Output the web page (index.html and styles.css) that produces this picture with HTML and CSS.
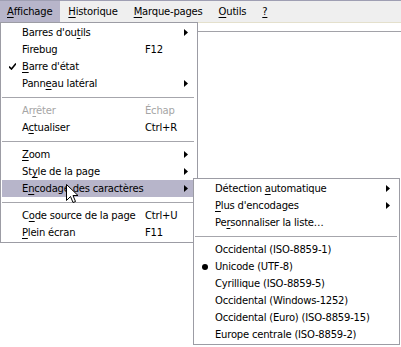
FILE: index.html
```html
<!DOCTYPE html>
<html lang="fr">
<head>
<meta charset="utf-8">
<title>Affichage</title>
<link rel="stylesheet" href="styles.css">
</head>
<body>
<div class="window">
  <div class="menubar">
    <span class="mb-item mb-open"><u>A</u>ffichage</span>
    <span class="mb-item"><u>H</u>istorique</span>
    <span class="mb-item"><u>M</u>arque-pages</span>
    <span class="mb-item"><u>O</u>utils</span>
    <span class="mb-item"><u>?</u></span>
  </div>
  <div class="content"></div>

  <div class="menu menu-main">
    <div class="mi"><span class="ic"></span><span class="lb">Barres d'ou<u>t</u>ils</span><span class="sc"></span><span class="ar"><svg width="4" height="7" viewBox="0 0 4 7"><path d="M0 0L4 3.5L0 7Z"/></svg></span></div>
    <div class="mi"><span class="ic"></span><span class="lb">Firebug</span><span class="sc">F12</span><span class="ar"></span></div>
    <div class="mi"><span class="ic"><svg width="7" height="7" viewBox="0 0 7 7"><path d="M0 3.5L2.5 6L7 0.5" fill="none" stroke="#000" stroke-width="1.6"/></svg></span><span class="lb"><u>B</u>arre d'état</span><span class="sc"></span><span class="ar"></span></div>
    <div class="mi"><span class="ic"></span><span class="lb">Pann<u>e</u>au latéral</span><span class="sc"></span><span class="ar"><svg width="4" height="7" viewBox="0 0 4 7"><path d="M0 0L4 3.5L0 7Z"/></svg></span></div>
    <div class="sep"></div>
    <div class="mi disabled"><span class="ic"></span><span class="lb">Ar<u>r</u>êter</span><span class="sc">Échap</span><span class="ar"></span></div>
    <div class="mi"><span class="ic"></span><span class="lb">A<u>c</u>tualiser</span><span class="sc">Ctrl+R</span><span class="ar"></span></div>
    <div class="sep"></div>
    <div class="mi"><span class="ic"></span><span class="lb"><u>Z</u>oom</span><span class="sc"></span><span class="ar"><svg width="4" height="7" viewBox="0 0 4 7"><path d="M0 0L4 3.5L0 7Z"/></svg></span></div>
    <div class="mi"><span class="ic"></span><span class="lb">St<u>y</u>le de la page</span><span class="sc"></span><span class="ar"><svg width="4" height="7" viewBox="0 0 4 7"><path d="M0 0L4 3.5L0 7Z"/></svg></span></div>
    <div class="mi active"><span class="ic"></span><span class="lb">E<u>n</u>codage des caractères</span><span class="sc"></span><span class="ar"><svg width="4" height="7" viewBox="0 0 4 7"><path d="M0 0L4 3.5L0 7Z"/></svg></span></div>
    <div class="sep"></div>
    <div class="mi"><span class="ic"></span><span class="lb">C<u>o</u>de source de la page</span><span class="sc">Ctrl+U</span><span class="ar"></span></div>
    <div class="mi"><span class="ic"></span><span class="lb"><u>P</u>lein écran</span><span class="sc">F11</span><span class="ar"></span></div>
  </div>

  <div class="menu menu-sub">
    <div class="mi"><span class="ic"></span><span class="lb">Détection <u>a</u>utomatique</span><span class="ar"><svg width="4" height="7" viewBox="0 0 4 7"><path d="M0 0L4 3.5L0 7Z"/></svg></span></div>
    <div class="mi"><span class="ic"></span><span class="lb"><u>P</u>lus d'encodages</span><span class="ar"><svg width="4" height="7" viewBox="0 0 4 7"><path d="M0 0L4 3.5L0 7Z"/></svg></span></div>
    <div class="mi"><span class="ic"></span><span class="lb">Pe<u>r</u>sonnaliser la liste…</span><span class="ar"></span></div>
    <div class="sep"></div>
    <div class="mi"><span class="ic"></span><span class="lb">Occidental (ISO-8859-1)</span><span class="ar"></span></div>
    <div class="mi"><span class="ic"><svg width="6" height="6" viewBox="0 0 6 6"><circle cx="3" cy="3" r="3"/></svg></span><span class="lb">Unicode (UTF-8)</span><span class="ar"></span></div>
    <div class="mi"><span class="ic"></span><span class="lb">Cyrillique (ISO-8859-5)</span><span class="ar"></span></div>
    <div class="mi"><span class="ic"></span><span class="lb">Occidental (Windows-1252)</span><span class="ar"></span></div>
    <div class="mi"><span class="ic"></span><span class="lb">Occidental (Euro) (ISO-8859-15)</span><span class="ar"></span></div>
    <div class="mi"><span class="ic"></span><span class="lb">Europe centrale (ISO-8859-2)</span><span class="ar"></span></div>
  </div>

  <svg class="cursor" width="12" height="20" viewBox="0 0 12 20"><path d="M0.5 0.5L0.5 16.5L4.5 12.5L7 18.5L9.5 17.5L7 11.5L12 11.5Z" fill="#fff" stroke="#000" stroke-width="1" stroke-linejoin="miter"/></svg>
</div>
</body>
</html>
```

FILE: styles.css
```css
* { box-sizing: border-box; }

html, body {
  margin: 0;
  padding: 0;
  background: #ffffff;
}

.window {
  position: relative;
  width: 401px;
  height: 347px;
  overflow: hidden;
  background: #ffffff;
  font-family: "DejaVu Sans", "Liberation Sans", sans-serif;
  font-size: 10px;
  letter-spacing: -0.2px;
  color: #000000;
}

u { text-decoration: underline; text-underline-offset: 2px; }

.menubar {
  display: flex;
  height: 23px;
  background: #efefef;
  border-top: 1px solid #9f9fb3;
  border-bottom: 1px solid #e4e0cc;
}

.mb-item {
  display: flex;
  align-items: center;
  height: 21px;
  padding: 0 8px;
}

.mb-item:first-child { padding-left: 7px; }

.mb-open { background: #b7b5ca; }

.content {
  margin-top: 8px;
  border-top: 1px solid #a2a2a8;
}

.menu {
  position: absolute;
  background: #ffffff;
  border: 1px solid #9c9ca4;
}

.menu-main {
  left: 0;
  top: 22px;
  width: 198px;
  padding: 1px 0 1px 0;
}

.menu-sub {
  left: 193px;
  top: 178px;
  width: 207px;
  padding: 1px 0 1px 0;
}

.mi {
  display: grid;
  height: 17px;
  align-items: center;
  white-space: nowrap;
}

.menu-main .mi { grid-template-columns: 21px 123px 1fr 14px; }
.menu-sub .mi { grid-template-columns: 21px 1fr 14px; }

.mi.active {
  background: #b7b5ca;
  margin-left: 1px;
  grid-template-columns: 20px 123px 1fr 14px;
}

.mi.disabled { color: #a5a5a5; }

.ic {
  display: flex;
  justify-content: center;
  align-items: center;
  padding-left: 1px;
}

.ic svg { display: block; }
.ic circle { fill: #000; }

.ar {
  display: flex;
  align-items: center;
  padding-left: 1px;
}

.ar svg { display: block; fill: #000; }

.sep {
  height: 10px;
  margin: 0 3px 0 1px;
  display: flex;
  align-items: center;
}

.sep::before {
  content: "";
  display: block;
  width: 100%;
  border-top: 1px solid #a6a6ac;
}

.menu-sub .sep { margin: 0 2px 0 1px; }

.cursor {
  position: absolute;
  left: 66px;
  top: 184px;
}
```
